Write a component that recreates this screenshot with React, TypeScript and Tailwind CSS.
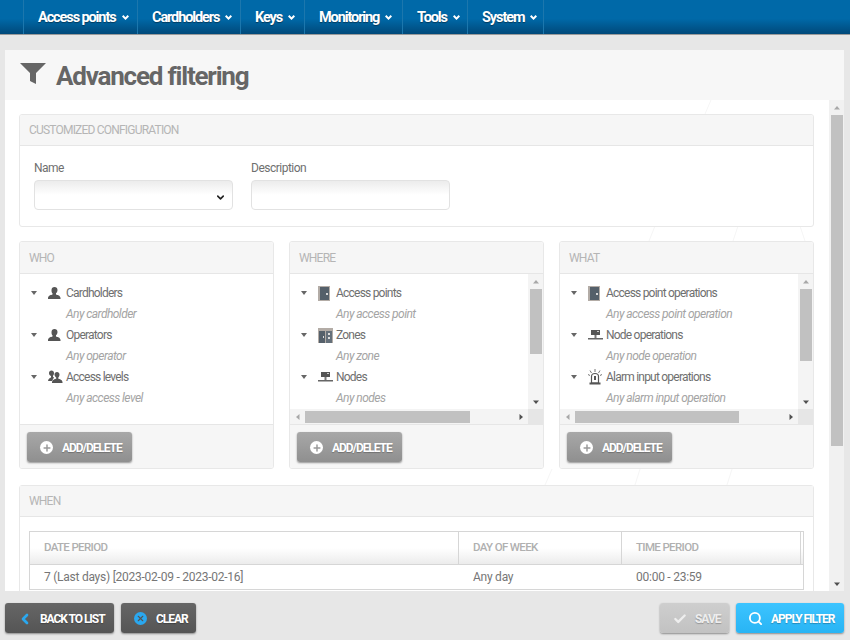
import { ChevronLeft, Check, ChevronDown, Search, Plus, X } from 'lucide-react';

const navItems = ['Access points', 'Cardholders', 'Keys', 'Monitoring', 'Tools', 'System'];
const navWidths = ['w-[114px]', 'w-[103px]', 'w-[64px]', 'w-[98px]', 'w-[65px]', 'w-[77px]'];

function PersonIcon() {
  return (
    <svg width="13" height="12" viewBox="0 0 13 12" fill="#555">
      <path d="M3.500 3c0-1.800 1.200-3 3-3s3 1.200 3 3c0 1.500-.7 2.700-1.500 3.300v1.200c1.500.5 4.200.8 4.500 3.500v1H0v-1c.3-2.700 3-3 4.500-3.500V6.300C3.700 5.700 3.500 4.500 3.500 3z" />
    </svg>
  );
}

function LevelsIcon() {
  return (
    <svg width="15" height="14" viewBox="0 0 15 14" fill="#555">
      <path d="M1 3c0-1.500 1-2.500 2.500-2.500S6 1.500 6 3c0 1.300-.5 2.300-1 2.800v1L6 7.500 4 11H0c.2-2 1.500-3 3-3.500V6C1.500 5.500 1 4.300 1 3z" />
      <path d="M6.500 4.500C6.500 3 7.500 2 9 2s2.500 1 2.500 2.500c0 1.300-.6 2.400-1.200 3v1.200c1.600.4 3.900.9 4.200 3.300V13H4v-1c.3-2.400 2.600-2.900 4.200-3.300V7.500c-.8-.6-1.700-1.700-1.700-3z" />
    </svg>
  );
}

function DoorIcon() {
  return (
    <svg width="12" height="15" viewBox="0 0 12 15">
      <rect width="12" height="15" fill="#b3aca6" />
      <rect x="2" y="1" width="9" height="13" fill="#55606a" />
      <rect x="8" y="7" width="2" height="2" fill="#d8d8d8" />
    </svg>
  );
}

function ZoneIcon() {
  return (
    <svg width="15" height="15" viewBox="0 0 15 15">
      <rect width="15" height="15" fill="#b3aca6" />
      <rect x="1" y="3" width="6" height="12" fill="#55606a" />
      <rect x="8" y="3" width="6" height="12" fill="#65707a" />
      <rect x="5" y="8" width="1" height="2" fill="#ddd" />
      <rect x="10" y="5" width="2" height="2" fill="#ddd" />
      <rect x="10" y="9" width="2" height="2" fill="#ddd" />
    </svg>
  );
}

function NodeIcon() {
  return (
    <svg width="15" height="10" viewBox="0 0 15 10">
      <rect x="3" y="0" width="9" height="5" fill="#555" />
      <rect x="9" y="1" width="2" height="1" fill="#ccc" />
      <rect x="6.500" y="5" width="2" height="3" fill="#777" />
      <rect x="0" y="8" width="15" height="1.500" fill="#666" />
    </svg>
  );
}

function AlarmIcon() {
  return (
    <svg width="14" height="16" viewBox="0 0 14 16">
      <path d="M3.500 14V7.500C3.500 5.500 5 4.500 7 4.500s3.500 1 3.500 3V14z" fill="#fff" stroke="#555" strokeWidth="1.200" />
      <rect x="6" y="7" width="2" height="4" fill="#555" />
      <rect x="1.500" y="13.500" width="11" height="2" fill="#555" />
      <path d="M7 0v3M2 1.500l1.500 2.500M12 1.500L10.500 4M0 5.500l2 1M14 5.500l-2 1" stroke="#777" strokeWidth="1" fill="none" />
    </svg>
  );
}

function FilterIcon() {
  return (
    <svg width="26" height="21" viewBox="0 0 26 21" fill="#666">
      <path d="M0 0h26l-10 10v11l-6-3v-8z" />
    </svg>
  );
}

function Caret({ dir }: { dir: 'up' | 'down' | 'left' | 'right' }) {
  const paths = { up: 'M1 5.500L4 2L7 5.500z', down: 'M1 2.500H7L4 6z', left: 'M5.500 1V7L2 4z', right: 'M2.500 1V7L6 4z' };
  const color = dir === 'down' || dir === 'right' ? '#505050' : '#a8a8a8';
  return (
    <svg width="8" height="8" viewBox="0 0 8 8" className="block" fill={color}>
      <path d={paths[dir]} />
    </svg>
  );
}

function TreeRow({ icon, label, hint }: { icon: React.ReactNode; label: string; hint: string }) {
  return (
    <>
      <div className="flex h-[21.1px] items-center whitespace-nowrap pt-[1px]">
        <svg width="6" height="4" viewBox="0 0 6 4" fill="#666" className="ml-[11px] mr-[11px] shrink-0">
          <path d="M0 0h6L3 4z" />
        </svg>
        <span className="flex w-[18px] shrink-0 items-center justify-start">{icon}</span>
        <span className="tracking-[-0.78px] text-[#6f6f6f]">{label}</span>
      </div>
      <div className="flex h-[21.1px] items-center whitespace-nowrap pl-[46px] italic tracking-[-0.55px] text-[#a4a4a4]">{hint}</div>
    </>
  );
}

function ActionButton({ children, label, className }: { children: React.ReactNode; label: string; className: string }) {
  return (
    <button className={`flex h-[30px] items-center whitespace-nowrap rounded-[3px] pt-[1px] text-[12px] font-bold tracking-[-1.05px] shadow-[0_1px_2px_rgba(0,0,0,0.4)] [text-shadow:0_1px_1px_rgba(0,0,0,0.25)] ${className}`}>
      {children}
      {label}
    </button>
  );
}

function AddDelete() {
  return (
    <div className="flex h-[44px] items-start border-t border-[#e6e6e6] bg-[#f6f6f6] pl-[7px] pt-[7px]">
      <ActionButton label="ADD/DELETE" className="w-[105px] bg-gradient-to-b from-[#a8a8a8] to-[#8f8f8f] pl-[13px] text-white">
        <span className="mr-[9px] flex h-[13px] w-[13px] items-center justify-center rounded-full bg-white">
          <Plus size={10} strokeWidth={3.500} color="#999" />
        </span>
      </ActionButton>
    </div>
  );
}

function CardHeader({ title, className }: { title: string; className?: string }) {
  return (
    <div className={`flex items-center border-b border-[#e6e6e6] bg-[#f6f6f6] pl-[9px] text-[12px] tracking-[-0.8px] text-[#b5b5b5] ${className ?? 'h-[32px]'}`}>
      {title}
    </div>
  );
}

function TreeCard({ title, rows, thumbHeight, thumbWidth, scroll }: { title: string; rows: React.ReactNode; thumbHeight: string; thumbWidth: string; scroll: boolean }) {
  return (
    <div className="flex h-[228px] w-[255px] flex-col overflow-hidden rounded-[3px] border border-[#e8e8e8] bg-white">
      <CardHeader title={title} />
      {scroll ? (
        <>
          <div className="flex h-[135px]">
            <div className="min-w-0 flex-1 overflow-hidden pt-[8px]">{rows}</div>
            <div className="flex w-[15px] flex-col items-center bg-[#f4f4f4]">
              <div className="flex h-[15px] items-center"><Caret dir="up" /></div>
              <div className={`w-[12px] bg-[#c1c1c1] ${thumbHeight}`} />
              <div className="mt-auto flex h-[15px] items-center"><Caret dir="down" /></div>
            </div>
          </div>
          <div className="flex h-[15px] items-center">
            <div className="flex h-full w-[238px] items-center bg-[#f4f4f4]">
              <div className="flex w-[15px] justify-center"><Caret dir="left" /></div>
              <div className={`h-[12px] bg-[#c1c1c1] ${thumbWidth}`} />
              <div className="ml-auto flex w-[15px] justify-center"><Caret dir="right" /></div>
            </div>
            <div className="h-full flex-1 bg-[#e6e6e6]" />
          </div>
        </>
      ) : (
        <div className="h-[150px] overflow-hidden pt-[8px]">{rows}</div>
      )}
      <AddDelete />
    </div>
  );
}

export default function App() {
  return (
    <div className="flex h-[640px] w-[850px] flex-col overflow-hidden bg-[#e7e7e7] text-[12px] [font-family:Roboto,'Liberation_Sans',sans-serif]">
      {/* Top nav */}
      <nav className="flex h-[35px] shrink-0 border-b border-[#9a9a9a] bg-gradient-to-b from-[#0069a8] from-55% to-[#00497a] pl-[23px]">
        {navItems.map((item, i) => (
          <div
            key={item}
            className={`flex items-center whitespace-nowrap border-l border-[#1c77ad] pl-[14px] pt-[1px] text-[14.5px] font-bold tracking-[-1.1px] text-white [text-shadow:0_1px_1px_rgba(0,0,0,0.4)] last:border-r ${navWidths[i]}`}
          >
            {item}
            <svg width="7" height="5" viewBox="0 0 7 5" className="ml-[6px]" fill="none" stroke="#fff" strokeWidth="2">
              <path d="M.7 .8L3.500 3.600L6.300 .8" />
            </svg>
          </div>
        ))}
      </nav>

      {/* Main panel */}
      <main className="mx-[5px] mt-[15px] flex h-[541px] w-[839px] shrink-0 flex-col">
        <div className="flex h-[50px] shrink-0 items-center bg-[#f7f7f7] pl-[15px]">
          <span className="mb-[3px] mr-[10px]"><FilterIcon /></span>
          <h1 className="pt-[3px] text-[26px] font-bold tracking-[-1.2px] text-[#666]">Advanced filtering</h1>
        </div>
        <div className="flex min-h-0 flex-1">
          <div className="relative min-w-0 flex-1 overflow-hidden bg-white">
            {/* faint web pattern behind the cards */}
            <svg className="absolute inset-0" width="824" height="491" fill="none" stroke="#f6f6f6">
              <path d="M706 0L700 14M650 126L644 141M733 126L728 141M795 126L800 141M547 369L540 385M635 369L630 385M727 369L722 385" />
            </svg>
            <div className="relative pl-[14px] pt-[14px]">
              <section className="h-[113px] w-[795px] overflow-hidden rounded-[3px] border border-[#e8e8e8] bg-white">
                <CardHeader title="CUSTOMIZED CONFIGURATION" className="h-[31px]" />
                <div className="flex gap-[18px] pl-[14px] pt-[13px]">
                  <div>
                    <label className="mb-[5px] block h-[16px] tracking-[-0.5px] text-[#6f6f6f]">Name</label>
                    <div className="relative h-[30px] w-[199px] rounded-[4px] border border-[#e2e2e2] bg-gradient-to-b from-[#ececec] to-white to-50%">
                      <ChevronDown size={11} strokeWidth={3.500} color="#222" className="absolute right-[6px] top-[11px]" />
                    </div>
                  </div>
                  <div>
                    <label className="mb-[5px] block h-[16px] tracking-[-0.5px] text-[#6f6f6f]">Description</label>
                    <div className="h-[30px] w-[199px] rounded-[4px] border border-[#e2e2e2] bg-gradient-to-b from-[#ececec] to-white to-50%" />
                  </div>
                </div>
              </section>

              <div className="mt-[14px] flex gap-[15px]">
                <TreeCard
                  title="WHO"
                  scroll={false}
                  thumbHeight=""
                  thumbWidth=""
                  rows={
                    <>
                      <TreeRow icon={<PersonIcon />} label="Cardholders" hint="Any cardholder" />
                      <TreeRow icon={<PersonIcon />} label="Operators" hint="Any operator" />
                      <TreeRow icon={<LevelsIcon />} label="Access levels" hint="Any access level" />
                    </>
                  }
                />
                <TreeCard
                  title="WHERE"
                  scroll
                  thumbHeight="h-[65px]"
                  thumbWidth="w-[165px]"
                  rows={
                    <>
                      <TreeRow icon={<DoorIcon />} label="Access points" hint="Any access point" />
                      <TreeRow icon={<ZoneIcon />} label="Zones" hint="Any zone" />
                      <TreeRow icon={<NodeIcon />} label="Nodes" hint="Any nodes" />
                    </>
                  }
                />
                <TreeCard
                  title="WHAT"
                  scroll
                  thumbHeight="h-[72px]"
                  thumbWidth="w-[164px]"
                  rows={
                    <>
                      <TreeRow icon={<DoorIcon />} label="Access point operations" hint="Any access point operation" />
                      <TreeRow icon={<NodeIcon />} label="Node operations" hint="Any node operation" />
                      <TreeRow icon={<AlarmIcon />} label="Alarm input operations" hint="Any alarm input operation" />
                    </>
                  }
                />
              </div>

              <section className="mt-[16px] w-[795px] rounded-[3px] border border-[#e8e8e8] bg-white pb-[20px]">
                <CardHeader title="WHEN" className="h-[31px]" />
                <div className="ml-[9px] mt-[14px] w-[775px] border border-[#d6d6d6]">
                  <div className="flex h-[33px] border-b border-[#d6d6d6] bg-gradient-to-b from-white from-50% to-[#ececec] text-[11.5px] font-medium tracking-[-0.65px] text-[#b0b0b0]">
                    <div className="flex w-[428px] items-center pl-[14px]">DATE PERIOD</div>
                    <div className="flex w-[163px] items-center border-l border-[#d6d6d6] pl-[14px]">DAY OF WEEK</div>
                    <div className="flex w-[180px] items-center border-l border-r border-[#d6d6d6] pl-[14px]">TIME PERIOD</div>
                  </div>
                  <div className="flex h-[24px] tracking-[-0.25px] text-[#767676]">
                    <div className="flex w-[428px] items-center pl-[14px]">7 (Last days) [2023-02-09 - 2023-02-16]</div>
                    <div className="flex w-[163px] items-center pl-[15px]">Any day</div>
                    <div className="flex w-[180px] items-center pl-[15px]">00:00 - 23:59</div>
                  </div>
                </div>
              </section>
            </div>
          </div>

          {/* Page scrollbar */}
          <div className="flex w-[15px] shrink-0 flex-col items-center bg-[#f1f1f1]">
            <div className="flex h-[15px] items-center"><Caret dir="up" /></div>
            <div className="h-[331px] w-[12px] bg-[#c1c1c1]" />
            <div className="mt-auto flex h-[15px] items-center"><Caret dir="down" /></div>
          </div>
        </div>
      </main>

      {/* Bottom bar */}
      <footer className="flex flex-1 items-start justify-between pl-[5px] pr-[6px] pt-[12px]">
        <div className="flex gap-[7px]">
          <ActionButton label="BACK TO LIST" className="w-[109px] bg-gradient-to-b from-[#666] to-[#555] pl-[12px] text-white">
            <ChevronLeft size={16} strokeWidth={4} color="#2aa8f0" className="mr-[7px]" />
          </ActionButton>
          <ActionButton label="CLEAR" className="w-[75px] bg-gradient-to-b from-[#666] to-[#555] pl-[13px] text-white">
            <span className="mr-[9px] flex h-[13px] w-[13px] items-center justify-center rounded-full bg-[#2aa8f0]">
              <X size={9} strokeWidth={3} color="#555" />
            </span>
          </ActionButton>
        </div>
        <div className="flex gap-[7px]">
          <ActionButton label="SAVE" className="w-[69px] bg-gradient-to-b from-[#cecece] to-[#c2c2c2] pl-[13px] text-[#eee]">
            <Check size={14} strokeWidth={4} color="#eee" className="mr-[8px]" />
          </ActionButton>
          <ActionButton label="APPLY FILTER" className="w-[108px] bg-gradient-to-b from-[#3cc4ff] to-[#28b4f4] pl-[12px] text-white">
            <Search size={15} strokeWidth={3} className="mr-[8px]" />
          </ActionButton>
        </div>
      </footer>
    </div>
  );
}
